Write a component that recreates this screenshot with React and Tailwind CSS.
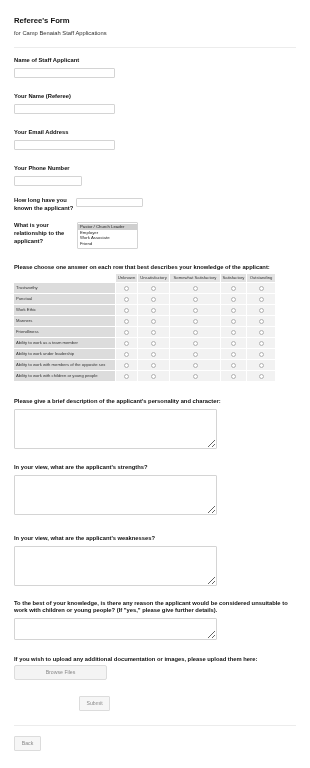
import React from 'react';

const rows = [
  'Trustworthy',
  'Punctual',
  'Work Ethic',
  'Manners',
  'Friendliness',
  'Ability to work as a team member',
  'Ability to work under leadership',
  'Ability to work with members of the opposite sex',
  'Ability to work with children or young people',
];

const cols = ['Unknown', 'Unsatisfactory', 'Somewhat Satisfactory', 'Satisfactory', 'Outstanding'];

function Field({ label, width }) {
  return (
    <div className="mt-[14px]">
      <div className="text-[5.8px] leading-[8px] font-bold text-[#111]">{label}</div>
      <div className={`mt-[4px] h-[10px] ${width} border border-[#d4d4d4] rounded-[1px] bg-white`} />
    </div>
  );
}

function Area({ label, height, mt }) {
  return (
    <div className={mt}>
      <div className="text-[5.8px] leading-[7px] font-bold text-[#111]">{label}</div>
      <textarea
        className={`mt-[4px] block w-[203px] ${height} border border-[#d4d4d4] rounded-[1px] bg-white outline-none`}
      />
    </div>
  );
}

function Radio() {
  return <span className="block w-[5px] h-[5px] rounded-full border-[0.5px] border-[#b0b0b0] bg-white" />;
}

export default function App() {
  return (
    <div className="min-h-[768px] bg-white px-[14px] pt-[17px] font-['Liberation_Sans',Arial,sans-serif] text-[#111]">
      <div className="w-[282px]">
        <h1 className="text-[7.7px] leading-[8px] font-bold">Referee's Form</h1>
        <p className="mt-[4px] text-[5.8px] leading-[8px] text-[#333]">for Camp Benaiah Staff Applications</p>
        <hr className="mt-[10px] border-0 border-t border-[#ececec]" />

        <div className="-mt-[6px]">
          <Field label="Name of Staff Applicant" width="w-[101px]" />
        </div>
        <Field label="Your Name (Referee)" width="w-[101px]" />
        <Field label="Your Email Address" width="w-[101px]" />
        <Field label="Your Phone Number" width="w-[68px]" />

        <div className="mt-[10px] flex items-start gap-[2px]">
          <div className="w-[60px] text-[5.8px] leading-[8px] font-bold">How long have you known the applicant?</div>
          <div className="mt-[2px] h-[9px] w-[67px] border border-[#d4d4d4] rounded-[1px] bg-white" />
        </div>

        <div className="mt-[9px] flex items-start gap-[3px]">
          <div className="w-[60px] text-[5.8px] leading-[8px] font-bold">What is your relationship to the applicant?</div>
          <div className="mt-[1px] h-[27px] w-[61px] border border-[#d4d4d4] rounded-[1px] bg-white pt-[1px] text-[4.3px] leading-[5.5px] text-[#222]">
            <div className="bg-[#cfcfcf] px-[2px]">Pastor / Church Leader</div>
            <div className="px-[2px]">Employer</div>
            <div className="px-[2px]">Work Associate</div>
            <div className="px-[2px]">Friend</div>
          </div>
        </div>

        <div className="mt-[14px] text-[5.8px] leading-[8px] font-bold">
          Please choose one answer on each row that best describes your knowledge of the applicant:
        </div>

        <div className="mt-[3px] grid grid-cols-[102px_22px_32px_51px_26px_29px] text-[4.2px] text-[#333]">
          <div className="h-[9px] bg-white border-r border-b border-white" />
          {cols.map((c) => (
            <div
              key={c}
              className="h-[9px] flex items-center justify-center bg-[#e3e3e3] border-r border-b border-white whitespace-nowrap"
            >
              {c}
            </div>
          ))}
          {rows.map((r) => (
            <React.Fragment key={r}>
              <div className="h-[11px] flex items-center pl-[2px] bg-[#dcdcdc] border-r border-b border-white whitespace-nowrap">
                {r}
              </div>
              {cols.map((c) => (
                <div
                  key={c}
                  className="h-[11px] flex items-center justify-center bg-[#f2f2f2] border-r border-b border-white"
                >
                  <Radio />
                </div>
              ))}
            </React.Fragment>
          ))}
        </div>

        <Area
          label="Please give a brief description of the applicant's personality and character:"
          height="h-[40px]"
          mt="mt-[16px]"
        />
        <Area label="In your view, what are the applicant's strengths?" height="h-[40px]" mt="mt-[15px]" />
        <Area label="In your view, what are the applicant's weaknesses?" height="h-[40px]" mt="mt-[20px]" />
        <Area
          label={'To the best of your knowledge, is there any reason the applicant would be considered unsuitable to work with children or young people? (If "yes," please give further details).'}
          height="h-[22px]"
          mt="mt-[14px]"
        />

        <div className="mt-[15px] text-[5.8px] leading-[8px] font-bold">
          If you wish to upload any additional documentation or images, please upload them here:
        </div>
        <button className="mt-[2px] block h-[15px] w-[93px] rounded-[2px] border border-[#dcdcdc] bg-[#f4f4f4] text-[5.2px] text-[#8a8a8a]">
          Browse Files
        </button>

        <button className="mt-[16px] ml-[65px] block h-[15px] w-[31px] rounded-[1px] border border-[#dcdcdc] bg-[#f6f6f6] text-[5.2px] text-[#8a8a8a]">
          Submit
        </button>

        <hr className="mt-[14px] border-0 border-t border-[#ececec]" />

        <button className="mt-[10px] block h-[15px] w-[27px] rounded-[1px] border border-[#dcdcdc] bg-[#f6f6f6] text-[5.2px] text-[#8a8a8a]">
          Back
        </button>
      </div>
    </div>
  );
}
